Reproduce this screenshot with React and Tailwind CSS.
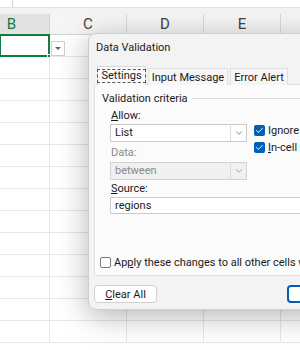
import { Check, ChevronDown } from "lucide-react";

const cols = [
  { name: "B", w: 50, active: true },
  { name: "C", w: 77 },
  { name: "D", w: 77 },
  { name: "E", w: 77 },
  { name: "F", w: 77 },
];

function Sheet() {
  const rows = Array.from({ length: 14 }, (_, i) => i);
  return (
    <div className="w-[300px] h-[350px] bg-white overflow-hidden">
      {/* formula bar strip */}
      <div className="h-[14px] bg-[#f3f3f3]">
        <div className="h-[8px] flex bg-white border-b border-[#e1e1e1]">
          <div className="w-[12px]" />
          <div className="flex-1 border-l border-[#d6d6d6]" />
        </div>
      </div>

      {/* column headers */}
      <div className="flex h-[21px] border-b border-[#d4d4d4] bg-[#f5f5f5]">
        {cols.map((c) => (
          <div
            key={c.name}
            style={{ width: c.w }}
            className={
              c.active
                ? "shrink-0 flex items-center justify-end pr-[33px] bg-[#e1e1e1] border-r border-[#d4d4d4] text-[#107c41] text-[15px]"
                : "shrink-0 flex items-center justify-center bg-[#f5f5f5] border-r border-[#d9d9d9] text-[#444] text-[15px]"
            }
          >
            {c.name}
          </div>
        ))}
      </div>

      {/* cells */}
      {rows.map((r) => (
        <div key={r} className="flex h-[22px] border-b border-[#e6e6e6]">
          {cols.map((c, ci) => (
            <div
              key={c.name}
              style={{ width: c.w }}
              className="shrink-0 relative border-r border-[#e6e6e6]"
            >
              {r === 0 && ci === 0 && (
                <div className="absolute -top-px -left-px -right-px -bottom-px border-2 border-[#107c41]">
                  <div className="absolute -right-[3px] -bottom-[3px] w-[4px] h-[4px] bg-[#107c41] border border-white" />
                </div>
              )}
              {r === 0 && ci === 1 && (
                <div className="absolute left-[1px] top-[6px] w-[14px] h-[15px] bg-white border border-[#d0d0d0] flex items-center justify-center">
                  <div className="w-0 h-0 border-l-[3px] border-r-[3px] border-t-[3px] border-l-transparent border-r-transparent border-t-[#666]" />
                </div>
              )}
            </div>
          ))}
        </div>
      ))}
    </div>
  );
}

function BlueCheck() {
  return (
    <div className="w-[11px] h-[11px] rounded-[2px] bg-[#005fb8] flex items-center justify-center shrink-0">
      <Check size={9} strokeWidth={2.5} className="text-white" />
    </div>
  );
}

function Dialog() {
  return (
    <div className="absolute left-[88px] top-[33px] w-[280px] h-[277px] rounded-[8px] bg-[#f3f3f3] border border-[#cfcfcf] shadow-[0_6px_30px_rgba(0,0,0,0.3)] text-[11px] leading-[15px] text-[#1a1a1a]">
      <div className="pl-[7px] pt-[6px] h-[32px]">Data Validation</div>

      {/* tabs */}
      <div className="flex items-end h-[19px] pl-[8px] gap-[2px]">
        <div className="relative z-10 h-[19px] w-[49px] bg-[#fbfbfb] border border-b-0 border-[#d9d9d9] flex items-center justify-center">
          <span className="border border-dashed border-[#555] px-[3px] leading-[12px] h-[14px]">
            Settings
          </span>
        </div>
        <div className="h-[17px] w-[80px] bg-[#f6f6f6] border border-b-0 border-[#e0e0e0] flex items-center justify-center">
          Input Message
        </div>
        <div className="h-[17px] w-[58px] bg-[#f6f6f6] border border-b-0 border-[#e0e0e0] flex items-center justify-center">
          Error Alert
        </div>
      </div>

      {/* panel */}
      <div className="ml-[5px] -mt-px h-[192px] bg-[#fbfbfb] border border-[#e0e0e0] pl-[7px] pt-[6px]">
        <div className="flex items-center gap-[4px] h-[15px]">
          <span>Validation criteria</span>
          <div className="flex-1 h-px bg-[#dcdcdc]" />
        </div>

        <div className="flex mt-[2px]">
          <div className="pl-[8px] w-[152px]">
            <div className="h-[15px] pl-px">
              <span className="underline">A</span>llow:
            </div>
            <div className="mt-[1px] h-[18px] w-[137px] bg-white border border-[#cbcbcb] flex">
              <div className="flex-1 pl-[4px] leading-[16px]">List</div>
              <div className="w-[16px] border-l border-[#dcdcdc] flex items-center justify-center">
                <ChevronDown size={10} className="text-[#666]" />
              </div>
            </div>
            <div className="mt-[3px] h-[15px] pl-px text-[#8a8a8a]">Data:</div>
            <div className="mt-[2px] h-[18px] w-[137px] bg-[#f0f0f0] border border-[#d3d3d3] flex">
              <div className="flex-1 pl-[4px] leading-[16px] text-[#8a8a8a]">between</div>
              <div className="w-[16px] border-l border-[#dcdcdc] flex items-center justify-center">
                <ChevronDown size={10} className="text-[#8a8a8a]" />
              </div>
            </div>
            <div className="mt-[1px] h-[15px] pl-px">
              <span className="underline">S</span>ource:
            </div>
            <div className="mt-[1px] h-[17px] w-[200px] bg-white border border-[#cbcbcb] pl-[4px] leading-[15px]">
              regions
            </div>
          </div>
          <div className="pt-[17px] flex flex-col gap-[6px] whitespace-nowrap">
            <div className="flex items-center gap-[3px] h-[11px]">
              <BlueCheck />
              <span>Ignore blank</span>
            </div>
            <div className="flex items-center gap-[3px] h-[11px]">
              <BlueCheck />
              <span>
                <span className="underline">I</span>n-cell dropdown
              </span>
            </div>
          </div>
        </div>

        <div className="mt-[41px] -ml-[2px] flex items-center gap-[3px] h-[15px] whitespace-nowrap">
          <div className="w-[11px] h-[11px] rounded-[2px] border border-[#7a7a7a] bg-white shrink-0" />
          <span>
            Ap<span className="underline">p</span>ly these changes to all other cells with the same settings
          </span>
        </div>
      </div>

      {/* buttons */}
      <div className="flex items-center mt-[9px] pl-[5px]">
        <div className="w-[63px] h-[18px] bg-white border border-[#d0d0d0] rounded-[4px] flex items-center justify-center">
          <span>
            <span className="underline">C</span>lear All
          </span>
        </div>
        <div className="ml-[130px] w-[60px] h-[18px] bg-white border-2 border-[#005fb8] rounded-[4px] flex items-center justify-center">
          OK
        </div>
      </div>
    </div>
  );
}

export default function App() {
  return (
    <div
      className="relative w-[300px] h-[350px] overflow-hidden"
      style={{ fontFamily: 'Roboto, "Noto Sans", sans-serif' }}
    >
      <Sheet />
      <Dialog />
    </div>
  );
}
